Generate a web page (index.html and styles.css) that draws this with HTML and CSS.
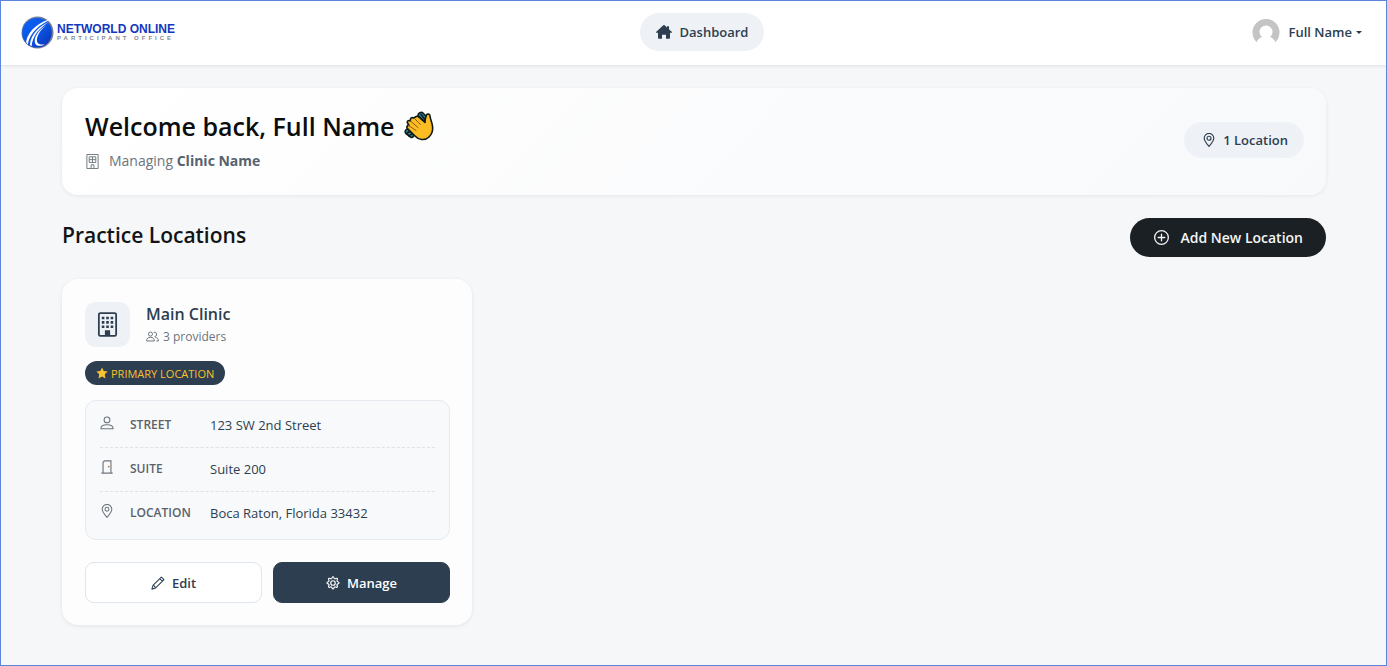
FILE: index.html
```html
<!DOCTYPE html>
<html lang="en">
<head>
<meta charset="utf-8">
<meta name="viewport" content="width=device-width, initial-scale=1">
<title>Dashboard</title>
<link rel="stylesheet" href="styles.css">
</head>
<body>
<header class="topbar">
  <a class="brand" href="#">
    <svg class="brand-mark" viewBox="0 0 33 33" aria-hidden="true">
      <defs>
        <linearGradient id="ring" x1="0" y1="0" x2="1" y2="1"><stop offset="0" stop-color="#8d8f98"/><stop offset=".5" stop-color="#5d6f9c"/><stop offset="1" stop-color="#8a8c92"/></linearGradient>
        <linearGradient id="globe" x1="0" y1="0" x2="1" y2="1"><stop offset="0" stop-color="#0a62f4"/><stop offset=".5" stop-color="#0c55e8"/><stop offset="1" stop-color="#0a2fae"/></linearGradient>
      </defs>
      <circle cx="16.500" cy="16.500" r="16" fill="url(#ring)"/>
      <circle cx="16" cy="16.700" r="14.800" fill="url(#globe)"/>
      <path d="M31 3C20 5 7.500 13 5 26l1.800 2.500C8.500 16.500 19 8 31 3z" fill="#fff"/>
      <path d="M28 6C18 10 10 18 8.800 29l1.800 1.200C11.500 20 18.500 11.500 28 6z" fill="#fff"/>
      <path d="M25.500 9C17.500 14 12.500 21 14 27c1 3.500 6 3.500 10 1.500-4 .3-7.500-.3-8-3C15.300 20.500 19 14 25.500 9z" fill="#fff"/>
    </svg>
    <span class="brand-text">
      <span class="brand-name">NETWORLD ONLINE</span>
      <span class="brand-sub">PARTICIPANT OFFICE</span>
    </span>
  </a>
  <nav class="main-nav">
    <a class="nav-pill" href="#">
      <svg class="icon" viewBox="0 0 16 16" aria-hidden="true"><path d="M7.300 1.300a1 1 0 0 1 1.400 0L11 3.400V2.200h2v3l2.700 2.500c.5.500.3 1.100-.4 1.100H14V14a.8.800 0 0 1-.8.800H10v-4H6v4H2.800A.8.800 0 0 1 2 14V8.800H.7C0 8.800-.2 8.200.3 7.700z"/></svg>
      Dashboard
    </a>
  </nav>
  <button class="user" type="button">
    <svg class="avatar" viewBox="0 0 28 28" aria-hidden="true"><path d="M4.700 24.200A13.500 13.500 0 1 1 23.300 24.200C22.500 21.500 20.500 19.800 18 19a6.500 6.500 0 1 0-8 0c-2.500.8-4.500 2.500-5.300 5.200z" fill="#c4c4c4"/></svg>
    Full Name
    <span class="caret"></span>
  </button>
</header>

<main class="page">
  <section class="hero">
    <div>
      <h1 class="hero-title">Welcome back, Full Name
        <svg class="wave" viewBox="0 0 30 30" role="img" aria-label="Waving hand">
          <g stroke="#10191c" stroke-width="1.600" stroke-linejoin="round" stroke-linecap="round">
            <path d="M14 4.500C14 1.500 17.500 .8 19 2l5 5.500-3.500 3z" fill="#2f8f93"/>
            <path d="M17 3.500l4 5" fill="none"/>
            <path d="M1.500 19.500c1-2 3-1.500 3.500-.5l4.500 5c.5 2-1.500 3-3 2L2 22.500c-1-1-1-2-.5-3z" fill="#2f8f93"/>
            <path d="M2.500 22.500l3-2M5 25l2.500-2" fill="none"/>
            <path d="M3.500 17.500c-1.500-1.500 0-3.500 1.500-3L3.500 12c-.8-1.800 1-3.200 2.500-2L6.500 9C6 7 8 6 9.500 7l2-1c1-1.200 2.500-.8 3.500.2l6 5.300c0-3 .5-5 1.500-7.500 1-1.800 3.500-1 3.500 1 0 2.500 2 6 2.500 10 .6 4-.5 8-3.500 11-4 4-10.500 3-14-1z" fill="#fbbd22"/>
            <path d="M11 8l5.500 5.500M7 10.500l7 6M4.500 14.500l7.500 5" fill="none" stroke="#8a5a10" stroke-width="1"/>
          </g>
        </svg>
      </h1>
      <p class="hero-sub">
        <svg class="icon" viewBox="0 0 16 16" aria-hidden="true"><path d="M2 .5h12v15H2zM4.500 3h7v6h-7zM8 3v6M4.500 6h7M6.500 15.500v-4h3v4" fill="none" stroke="currentColor"/></svg>
        <span>Managing <strong>Clinic Name</strong></span>
      </p>
    </div>
    <span class="count-pill">
      <svg class="icon" viewBox="0 0 16 16" aria-hidden="true"><path d="M8 15.300C5.200 12 2.500 9 2.500 6a5.500 5.500 0 0 1 11 0c0 3-2.700 6-5.500 9.300z" fill="none" stroke="currentColor" stroke-width="1.300"/><circle cx="8" cy="6" r="2.300" fill="none" stroke="currentColor" stroke-width="1.300"/></svg>
      1 Location
    </span>
  </section>

  <div class="section-head">
    <h2 class="section-title">Practice Locations</h2>
    <button class="add-button" type="button">
      <svg class="icon" viewBox="0 0 16 16" aria-hidden="true"><path d="M8 .7a7.300 7.300 0 1 0 0 14.600A7.300 7.300 0 0 0 8 .7zM8 4.500v7M4.500 8h7" fill="none" stroke="currentColor" stroke-width="1.400" stroke-linecap="round"/></svg>
      Add New Location
    </button>
  </div>

  <div class="locations">
    <article class="card">
      <div class="card-head">
        <span class="card-icon">
          <svg viewBox="0 0 24 24" aria-hidden="true"><rect x="3.700" y="1" width="16.600" height="22" rx="1.500" fill="none" stroke="currentColor" stroke-width="1.700"/><path d="M6.500 4.500h2.500V7H6.500zM10.750 4.500h2.500V7h-2.500zM15 4.500h2.500V7H15zM6.500 8.700h2.500v2.500H6.500zM10.750 8.700h2.500v2.500h-2.500zM15 8.700h2.500v2.500H15zM6.500 12.900h2.500v2.500H6.500zM10.750 12.900h2.500v2.500h-2.500zM15 12.900h2.500v2.500H15zM9.500 17.500h5V23h-5z" fill="currentColor"/></svg>
        </span>
        <div>
          <h3 class="card-title">Main Clinic</h3>
          <p class="card-meta">
            <svg class="icon" viewBox="0 0 16 16" aria-hidden="true"><path d="M5.500 2.500a2.500 2.500 0 1 0 0 5 2.500 2.500 0 0 0 0-5zM.7 13.500c0-3 2-4.500 4.800-4.500s4.800 1.500 4.800 4.500zM9.500 3a2.600 2.600 0 1 1 1 5M11.500 9.200c2.500 0 3.800 1.600 3.800 4.300h-2.500" fill="none" stroke="currentColor" stroke-width="1.200"/></svg>
            3 providers
          </p>
        </div>
      </div>

      <span class="badge">
        <svg class="icon" viewBox="0 0 16 16" aria-hidden="true"><path d="M8 .5l2.300 4.900 5.200.7-3.800 3.700.9 5.400L8 12.600l-4.600 2.600.9-5.400L.5 6.100l5.200-.7z"/></svg>
        PRIMARY LOCATION
      </span>

      <dl class="details">
        <div class="row">
          <svg class="icon" viewBox="0 0 16 16" aria-hidden="true"><path d="M8 1.200a3.300 3.300 0 1 0 0 6.600 3.300 3.300 0 0 0 0-6.600zM1 14.500c0-3 3-4.500 7-4.500s7 1.500 7 4.500z" fill="none" stroke="currentColor" stroke-width="1.200" stroke-linejoin="round"/></svg>
          <dt>STREET</dt><dd>123 SW 2nd Street</dd>
        </div>
        <div class="row">
          <svg class="icon" viewBox="0 0 16 16" aria-hidden="true"><path d="M1.500 15h13M3.500 15V2.500l1.500-1.500h7.500v14" fill="none" stroke="currentColor" stroke-width="1.300"/><circle cx="10" cy="7.500" r="1" fill="#b07a3c"/></svg>
          <dt>SUITE</dt><dd>Suite 200</dd>
        </div>
        <div class="row">
          <svg class="icon" viewBox="0 0 16 16" aria-hidden="true"><path d="M8 15.300C5.200 12 2.500 9 2.500 6a5.500 5.500 0 0 1 11 0c0 3-2.700 6-5.500 9.300z" fill="none" stroke="currentColor" stroke-width="1.200"/><circle cx="8" cy="6" r="2.200" fill="none" stroke="currentColor" stroke-width="1.200"/></svg>
          <dt>LOCATION</dt><dd>Boca Raton, Florida 33432</dd>
        </div>
      </dl>

      <div class="actions">
        <button class="btn btn-outline" type="button">
          <svg class="icon" viewBox="0 0 16 16" aria-hidden="true"><path d="M11.800 1.200l3 3L5.300 13.700l-4.300 1.300 1.300-4.300zM10 3l3 3M2.500 10.500l1.200.8.500 1 1 .4" fill="none" stroke="currentColor" stroke-width="1.200" stroke-linejoin="round"/></svg>
          Edit
        </button>
        <button class="btn btn-solid" type="button">
          <svg class="icon" viewBox="0 0 16 16" aria-hidden="true"><circle cx="8" cy="8" r="2.600" fill="none" stroke="currentColor" stroke-width="1.300"/><path d="M8.900 1.600c-.3-1-1.500-1-1.800 0l-.2.600a1.400 1.400 0 0 1-2 .8l-.6-.3c-.9-.5-1.800.4-1.300 1.300l.3.600a1.400 1.400 0 0 1-.8 2l-.6.200c-1 .3-1 1.700 0 2l.6.200a1.400 1.400 0 0 1 .8 2l-.3.600c-.5.900.4 1.800 1.300 1.300l.6-.3a1.400 1.400 0 0 1 2 .8l.2.600c.3 1 1.500 1 1.800 0l.2-.6a1.400 1.400 0 0 1 2-.8l.6.300c.9.500 1.800-.4 1.300-1.300l-.3-.6a1.400 1.400 0 0 1 .8-2l.6-.2c1-.3 1-1.700 0-2l-.6-.2a1.400 1.400 0 0 1-.8-2l.3-.6c.5-.9-.4-1.800-1.300-1.300l-.6.300a1.400 1.400 0 0 1-2-.8z" fill="none" stroke="currentColor" stroke-width="1.300"/></svg>
          Manage
        </button>
      </div>
    </article>
  </div>
</main>
</body>
</html>
```
FILE: styles.css
```css
* { box-sizing: border-box; }
h1, h2, h3, p, dl, dt, dd { margin: 0; }
body {
  margin: 0;
  min-height: 100vh;
  border: 1px solid #5b86dc;
  background: #f6f7f8;
  color: #2c3e50;
  font-family: "Open Sans", "Noto Sans", sans-serif;
  font-size: 13px;
}
button { font: inherit; color: inherit; cursor: pointer; }
.icon { width: 14px; height: 14px; flex: none; fill: currentColor; }

.topbar {
  display: grid;
  grid-template-columns: 1fr auto 1fr;
  align-items: center;
  height: 65px;
  padding: 0 24px 2px 20px;
  background: #fff;
  border-bottom: 1px solid #e8e9eb;
  box-shadow: 0 1px 3px rgba(0, 0, 0, .06);
}
.brand { display: flex; align-items: center; gap: 3px; text-decoration: none; }
.brand-mark { width: 33px; height: 33px; }
.brand-text { display: flex; flex-direction: column; font-family: "Liberation Sans", Arial, sans-serif; }
.brand-name { font-size: 12px; line-height: 12px; font-weight: 700; color: #1238c0; }
.brand-sub { font-size: 6px; line-height: 7px; letter-spacing: 3px; font-weight: 700; color: #858996; white-space: nowrap; }
.main-nav { margin-left: 21px; }
.nav-pill {
  display: flex;
  align-items: center;
  gap: 8px;
  height: 38px;
  padding: 0 16px;
  border-radius: 19px;
  background: #eef2f7;
  color: #2c3e50;
  font-size: 13px;
  font-weight: 600;
  text-decoration: none;
}
.nav-pill .icon { width: 16px; height: 16px; }
.user {
  justify-self: end;
  display: flex;
  align-items: center;
  padding: 0;
  border: 0;
  background: none;
  font-size: 13px;
  font-weight: 600;
}
.avatar { width: 28px; height: 28px; margin-right: 9px; }
.caret { margin-left: 4px; border: 3px solid transparent; border-top: 3px solid currentColor; border-bottom: 0; }

.page { padding: 22px 60px 39px 61px; }
.hero {
  display: flex;
  align-items: center;
  justify-content: space-between;
  min-height: 107px;
  padding: 19px 22px 22px 23px;
  border-radius: 16px;
  background: linear-gradient(135deg, #fff, #f8f9fb);
  box-shadow: 0 1px 4px rgba(0, 0, 0, .07);
}
.hero-title {
  display: flex;
  align-items: center;
  gap: 9px;
  font-size: 25px;
  line-height: 36px;
  font-weight: 600;
  color: #0c0d0e;
}
.wave { width: 30px; height: 30px; }
.hero-sub {
  display: flex;
  align-items: center;
  gap: 9px;
  margin-top: 6px;
  font-size: 14px;
  line-height: 22px;
  color: #6c757d;
}
.hero-sub strong { color: #56626e; }
.hero-sub .icon { width: 15px; height: 15px; }
.count-pill {
  display: flex;
  align-items: center;
  gap: 7px;
  height: 36px;
  padding: 0 16px 0 18px;
  border-radius: 18px;
  background: #eef2f7;
  font-weight: 600;
}

.section-head { display: flex; justify-content: space-between; align-items: center; margin: 23px 0 22px; }
.section-title { padding-bottom: 6px; font-size: 21px; line-height: 30px; font-weight: 600; color: #121416; }
.add-button {
  display: flex;
  align-items: center;
  gap: 11px;
  height: 39px;
  padding: 0 23px 0 24px;
  border: 0;
  border-radius: 20px;
  background: #1b2024;
  color: #f4f5f6;
  font-size: 14px;
  font-weight: 600;
}
.add-button .icon { width: 15px; height: 15px; }

.locations { display: grid; grid-template-columns: repeat(3, 1fr); gap: 17px; }
.card {
  padding: 23px 22px 22px 23px;
  border-radius: 16px;
  background: #fdfdfe;
  box-shadow: 0 1px 4px rgba(0, 0, 0, .08);
}
.card-head { display: flex; align-items: center; gap: 16px; }
.card-icon {
  display: grid;
  place-items: center;
  width: 45px;
  height: 45px;
  border-radius: 11px;
  background: #eef2f7;
}
.card-icon svg { width: 25px; height: 25px; }
.card-title { font-size: 16px; line-height: 24px; font-weight: 600; }
.card-meta { display: flex; align-items: center; gap: 4px; font-size: 12px; line-height: 21px; color: #6c757d; }
.card-meta .icon { width: 13px; height: 13px; }
.badge {
  display: inline-flex;
  align-items: center;
  gap: 3px;
  height: 24px;
  margin-top: 14px;
  padding: 0 11px;
  border-radius: 12px;
  background: #2c3e50;
  color: #fbc02d;
  font-size: 11px;
  vertical-align: top;
}
.badge .icon { width: 12px; height: 12px; }
.details {
  margin-top: 15px;
  padding: 3px 14px 4px;
  border: 1px solid #e5eaf1;
  border-radius: 11px;
  background: #f8f9fb;
}
.row {
  display: grid;
  grid-template-columns: 14px 64px 1fr;
  column-gap: 16px;
  align-items: center;
  height: 43px;
  padding-bottom: 2px;
}
.row + .row { height: 44px; border-top: 1px dashed #dde2e8; }
.row .icon { margin-bottom: 4px; color: #6c757d; }
.row dt { font-size: 12px; font-weight: 600; color: #5b6269; }
.row dd { color: #2c3e50; }

.actions { display: grid; grid-template-columns: 1fr 1fr; gap: 11px; margin-top: 22px; }
.btn {
  display: flex;
  align-items: center;
  justify-content: center;
  gap: 7px;
  height: 41px;
  border: 1px solid #dfe5ee;
  border-radius: 9px;
  font-weight: 600;
}
.btn-outline { background: #fff; }
.btn-solid { background: #2c3e50; border-color: #2c3e50; color: #fff; }
```
